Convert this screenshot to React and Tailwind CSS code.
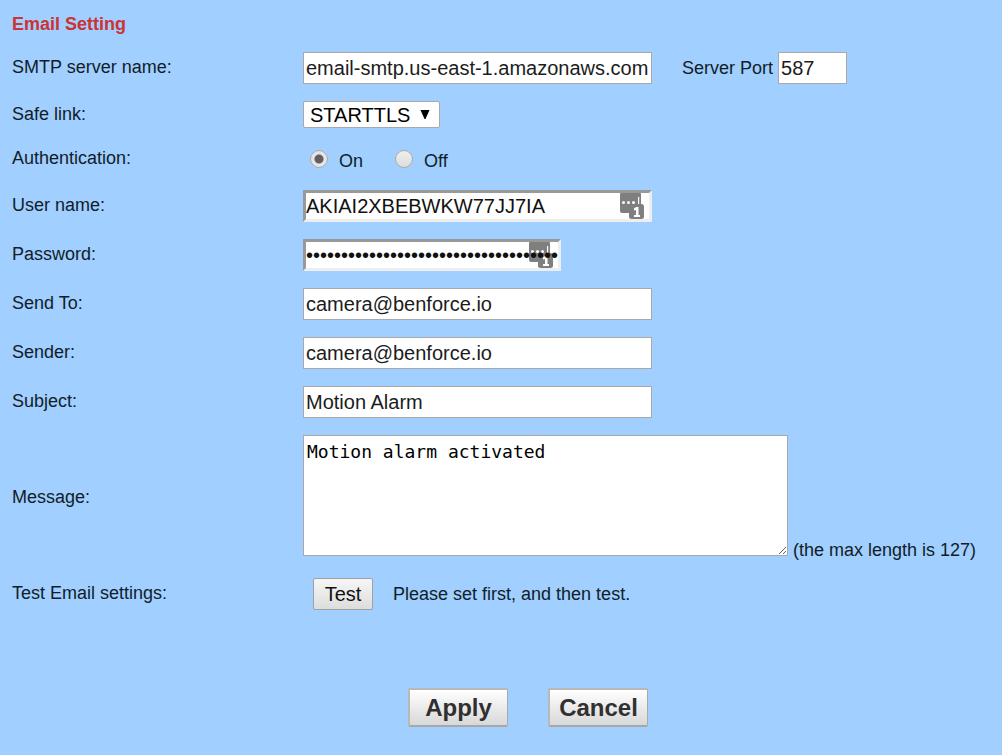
function Row({ label, htmlFor, children, className = "", labelClass = "pb-0.5" }) {
  return (
    <div className={`grid grid-cols-[291px_1fr] items-center ${className}`}>
      <label htmlFor={htmlFor} className={labelClass}>{label}</label>
      <div className="flex items-center">{children}</div>
    </div>
  );
}

const field = "h-8 border border-[#a9a9a9] bg-white px-0.5 text-xl text-[#1c1c1c] outline-none";
const inset =
  "relative h-8 border-3 border-t-[#999999] border-l-[#999999] border-r-[#eeeeee] border-b-[#eeeeee] bg-white";
const insetInput = "relative block h-full w-full bg-transparent text-xl leading-6 text-[#111] outline-none";

function KeyBadge({ className }) {
  return (
    <svg viewBox="0 0 24 26" aria-hidden="true" className={`absolute top-0 h-[26px] w-6 ${className}`}>
      <path d="M1 0h19a1 1 0 0 1 1 1v18a1 1 0 0 1-1 1H2a2 2 0 0 1-2-2V1a1 1 0 0 1 1-1z" fill="#7f7f7f" />
      <circle cx="3.5" cy="9.500" r="1.5" fill="#fff" />
      <circle cx="8.500" cy="9.500" r="1.5" fill="#fff" />
      <circle cx="13.500" cy="9.500" r="1.5" fill="#fff" />
      <path d="M18 4h1.200v8H18z" fill="#fff" />
      <rect x="9" y="11" width="15" height="15" rx="2.500" fill="#7f7f7f" />
      <path d="M16 14h2.500v8H20v2h-6v-2h2v-5l-2 .6v-2z" fill="#fff" />
    </svg>
  );
}

function Radio({ id, label, defaultChecked }) {
  return (
    <span className="flex items-center gap-[11px]">
      <input
        id={id}
        type="radio"
        name="auth"
        defaultChecked={defaultChecked}
        className="size-[18px] appearance-none rounded-full border border-[#aaa] bg-linear-to-b from-[#eee] to-[#ddd] checked:bg-[radial-gradient(circle,#606060_0_4px,#e4e4e4_5px)]"
      />
      <label htmlFor={id} className="pt-1">{label}</label>
    </span>
  );
}

const action =
  "h-[39px] w-25 rounded-xs border-2 border-r border-t-[#b8b8b8] border-l-[#b8b8b8] border-r-[#a8a8a8] border-b-[#a8a8a8] bg-linear-to-b from-white to-[#d8d8d8] text-2xl leading-8 font-bold text-[#303030]";

export default function App() {
  return (
    <form
      onSubmit={(e) => e.preventDefault()}
      className="min-h-screen bg-[#a1cfff] px-3 pt-3 pb-7 font-['Liberation_Sans',Arial,sans-serif] text-lg leading-6 text-[#111d28]"
    >
      <h1 className="mb-4 font-bold text-[#cc3333]">Email Setting</h1>
      <div className="flex flex-col gap-[17px]">
        <Row label="SMTP server name:" htmlFor="smtp">
          <input id="smtp" className={`${field} w-[349px]`} defaultValue="email-smtp.us-east-1.amazonaws.com" />
          <label htmlFor="port" className="mr-[5px] ml-[30px]">Server Port</label>
          <input id="port" className={`${field} w-[69px]`} defaultValue="587" />
        </Row>
        <Row label="Safe link:" htmlFor="safe">
          <span className="relative">
            <select
              id="safe"
              className="block h-[27px] w-[137px] appearance-none rounded-xs border border-[#a9a9a9] bg-white pl-1.5 text-xl leading-6 text-black"
            >
              <option>STARTTLS</option>
            </select>
            <svg viewBox="0 0 10 9" aria-hidden="true" className="pointer-events-none absolute top-[9px] right-2.5 h-[9px] w-2.5">
              <path d="M.5 0h9L5.500 9h-1z" fill="#000" />
            </svg>
          </span>
        </Row>
        <div className="grid h-7 grid-cols-[291px_1fr] items-center" role="radiogroup" aria-label="Authentication">
          <span className="pb-0.5">Authentication:</span>
          <div className="flex items-center gap-8 pl-[7px]">
            <Radio id="on" label="On" defaultChecked />
            <Radio id="off" label="Off" />
          </div>
        </div>
        <Row label="User name:" htmlFor="user">
          <div className={`${inset} w-[349px]`}>
            <KeyBadge className="right-[5px]" />
            <input id="user" className={insetInput} defaultValue="AKIAI2XBEBWKW77JJ7IA" />
          </div>
        </Row>
        <Row label="Password:" htmlFor="pass">
          <div className={`${inset} w-[258px]`}>
            <KeyBadge className="right-[5px]" />
            <input id="pass" type="password" className={insetInput} defaultValue="abcdefghijklmnopqrstuvwxyz0123456789" />
          </div>
        </Row>
        <Row label="Send To:" htmlFor="to">
          <input id="to" className={`${field} w-[349px]`} defaultValue="camera@benforce.io" />
        </Row>
        <Row label="Sender:" htmlFor="sender">
          <input id="sender" className={`${field} w-[349px]`} defaultValue="camera@benforce.io" />
        </Row>
        <Row label="Subject:" htmlFor="subject">
          <input id="subject" className={`${field} w-[349px]`} defaultValue="Motion Alarm" />
        </Row>
        <Row label="Message:" htmlFor="message" labelClass="pt-0.5">
          <textarea
            id="message"
            className="h-[121px] w-[485px] resize border border-[#a9a9a9] bg-white px-[3px] py-1 font-['DejaVu_Sans_Mono',monospace] text-lg leading-6 text-black outline-none"
            defaultValue="Motion alarm activated"
          />
          <span className="-mb-1.5 ml-[5px] self-end">(the max length is 127)</span>
        </Row>
      </div>
      <Row label="Test Email settings:" htmlFor="test" className="mt-[22px]">
        <button
          id="test"
          type="button"
          className="ml-2.5 h-8 w-15 rounded-xs border border-[#a0a0a0] bg-linear-to-b from-[#f6f6f6] to-[#dddddd] text-xl text-[#111]"
        >
          Test
        </button>
        <span className="ml-5">Please set first, and then test.</span>
      </Row>
      <div className="mt-[78px] flex justify-center gap-10 pl-[54px]">
        <button type="submit" className={action}>Apply</button>
        <button type="button" className={action}>Cancel</button>
      </div>
    </form>
  );
}
